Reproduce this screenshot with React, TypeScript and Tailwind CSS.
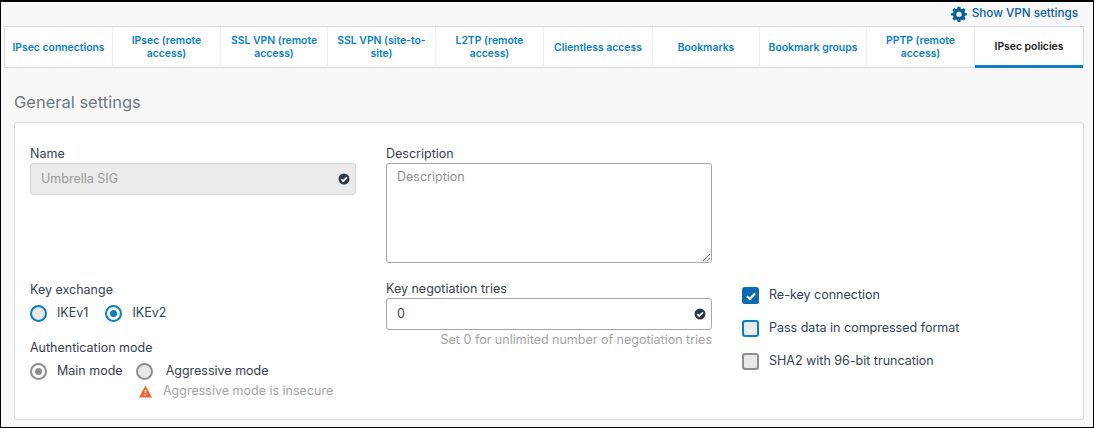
const font = "[font-family:Inter,'Liberation_Sans',sans-serif]";

type Tab = { label: string; width: string; active?: boolean };

const tabs: Tab[] = [
  { label: 'IPsec connections', width: 'w-[108px]' },
  { label: 'IPsec (remote access)', width: 'w-[108px]' },
  { label: 'SSL VPN (remote access)', width: 'w-[107px]' },
  { label: 'SSL VPN (site-to-site)', width: 'w-[108px]' },
  { label: 'L2TP (remote access)', width: 'w-[108px]' },
  { label: 'Clientless access', width: 'w-[109px]' },
  { label: 'Bookmarks', width: 'w-[107px]' },
  { label: 'Bookmark groups', width: 'w-[107px]' },
  { label: 'PPTP (remote access)', width: 'w-[108px]' },
  { label: 'IPsec policies', width: 'w-[108px]', active: true },
];

const CheckBadge = () => (
  <svg viewBox="0 0 12 12" className="h-3 w-3 shrink-0">
    <circle cx="6" cy="6" r="5.5" fill="#2c3a47" />
    <path d="M3.2 6.2 5.2 8.1 8.9 4.3" fill="none" stroke="#fff" strokeWidth="1.7" />
  </svg>
);

const Radio = ({ checked, tone }: { checked?: boolean; tone: 'blue' | 'gray' }) => (
  <span
    className={`flex h-[17px] w-[17px] shrink-0 items-center justify-center rounded-full border-2 ${
      tone === 'blue' ? 'border-[#0a7fc4]' : 'border-[#8e8e8e]'
    } ${checked ? 'bg-white' : 'bg-[#e8e8e8]'}`}
  >
    {checked && (
      <span className={`h-[7px] w-[7px] rounded-full ${tone === 'blue' ? 'bg-[#0a7fc4]' : 'bg-[#8e8e8e]'}`} />
    )}
  </span>
);

const Checkbox = ({ state }: { state: 'on' | 'soft' | 'off' }) => {
  if (state === 'on') {
    return (
      <span className="flex h-[17px] w-[17px] shrink-0 items-center justify-center rounded-[3px] bg-[#0a6bb0]">
        <svg viewBox="0 0 12 12" className="h-3 w-3">
          <path d="M2 6.3 4.8 9 10 3.6" fill="none" stroke="#fff" strokeWidth="2.2" />
        </svg>
      </span>
    );
  }
  return (
    <span
      className={`flex h-[17px] w-[17px] shrink-0 items-center justify-center rounded-[3px] border-2 bg-[#e8e8e8] ${
        state === 'soft' ? 'border-[#0a7fc4]' : 'border-[#8e8e8e]'
      }`}
    >
      {state === 'soft' && (
        <svg viewBox="0 0 12 12" className="h-3 w-3">
          <path d="M2 6.3 4.8 9 10 3.6" fill="none" stroke="#f7f7f7" strokeWidth="2.2" />
        </svg>
      )}
    </span>
  );
};

export default function App() {
  return (
    <div className={`${font} box-border flex h-[428px] w-[1094px] flex-col overflow-hidden border border-t-2 border-black bg-[#f8f8f8] pl-[3px] pr-[9px] text-[12.5px] text-[#34424f]`}>
      <div className="flex h-6 items-center justify-end pr-[6px] text-[11.7px] font-medium text-[#0a5f9c]">
        <svg viewBox="0 0 24 24" className="mr-[5px] h-4 w-4" fill="#0a5f9c">
          <path
            fillRule="evenodd"
            d="M10 1h4l.7 3.1 1.7.7 2.7-1.7 2.8 2.8-1.7 2.7.7 1.7L24 11v3l-3.1.7-.7 1.7 1.7 2.7-2.8 2.8-2.7-1.7-1.7.7L14 24h-4l-.7-3.1-1.7-.7-2.7 1.7-2.8-2.8 1.7-2.7-.7-1.7L0 14v-3l3.1-.7.7-1.7L2.1 5.900l2.8-2.8 2.7 1.7 1.700-.7zM12 8.500a4 4 0 1 0 0 8 4 4 0 0 0 0-8z"
          />
        </svg>
        Show VPN settings
      </div>

      <div className="flex h-[42px] border border-[#d9d9d9] bg-white">
        {tabs.map((tab) => (
          <div
            key={tab.label}
            className={`flex items-center justify-center px-[4px] text-center text-[10.4px] font-semibold leading-[13px] ${tab.width} ${
              tab.active
                ? '-mb-px border-b-[3px] border-[#0a7fc4] text-[#222]'
                : 'border-r border-[#f0f0f0] text-[#0a7fc4]'
            }`}
          >
            {tab.label}
          </div>
        ))}
      </div>

      <h2 className="mt-[23px] pl-[10px] text-[16.5px] leading-[22px] text-[#6f7881]">General settings</h2>

      <div className="ml-[10px] mt-[9px] grid h-[298px] grid-cols-[326px_326px_1fr] grid-rows-[135px_1fr] gap-x-[30px] rounded-[3px] border border-[#dcdcdc] bg-white pl-[15px] pt-[22px]">
        <div>
          <div className="h-[18px] leading-[17px]">Name</div>
          <div className="flex h-[32px] items-center justify-between rounded-[3px] border border-[#d4d4d4] bg-[#ebebeb] pl-[10px] pr-[5px] text-[#9a9a9a]">
            Umbrella SIG
            <CheckBadge />
          </div>
        </div>

        <div>
          <div className="h-[18px] leading-[17px]">Description</div>
          <div className="relative h-[100px] rounded-[3px] border border-[#a6a6a6] px-[10px] pt-[4px] text-[#8f8f8f]">
            Description
            <svg viewBox="0 0 8 8" className="absolute bottom-px right-px h-2 w-2" stroke="#666" strokeWidth="1">
              <path d="M1 8 8 1M5 8 8 5" />
            </svg>
          </div>
        </div>
        <div />

        <div className="pt-px">
          <div className="h-[17px] leading-[17px]">Key exchange</div>
          <div className="mt-[7px] flex h-[17px] items-center">
            <Radio tone="blue" />
            <span className="ml-[10px]">IKEv1</span>
            <span className="ml-[17px]" />
            <Radio tone="blue" checked />
            <span className="ml-[10px]">IKEv2</span>
          </div>
          <div className="mt-[17px] h-[17px] leading-[17px]">Authentication mode</div>
          <div className="mt-[7px] flex h-[17px] items-center">
            <Radio tone="gray" checked />
            <span className="ml-[10px]">Main mode</span>
            <span className="ml-[13px]" />
            <Radio tone="gray" />
            <span className="ml-[13px]">Aggressive mode</span>
          </div>
          <div className="mt-[3px] flex h-[17px] items-center pl-[109px] text-[#a3a3a3]">
            <svg viewBox="0 0 14 13" className="mr-[11px] h-[13px] w-[13px] shrink-0">
              <path d="M7 0 14 13H0z" fill="#f0622d" />
              <path d="M7 4.500v4M7 9.500v1.500" stroke="#fff" strokeWidth="1.500" />
            </svg>
            Aggressive mode is insecure
          </div>
        </div>

        <div>
          <div className="h-[18px] leading-[17px]">Key negotiation tries</div>
          <div className="flex h-[32px] items-center justify-between rounded-[3px] border border-[#a6a6a6] pl-[10px] pr-[5px]">
            0
            <CheckBadge />
          </div>
          <div className="mt-px text-right leading-[17px] text-[#a3a3a3]">
            Set 0 for unlimited number of negotiation tries
          </div>
        </div>

        <div className="flex flex-col gap-[16px] pt-[7px]">
          <label className="flex h-[17px] items-center gap-[10px]">
            <Checkbox state="on" />
            Re-key connection
          </label>
          <label className="flex h-[17px] items-center gap-[10px]">
            <Checkbox state="soft" />
            Pass data in compressed format
          </label>
          <label className="flex h-[17px] items-center gap-[10px]">
            <Checkbox state="off" />
            SHA2 with 96-bit truncation
          </label>
        </div>
      </div>
    </div>
  );
}
